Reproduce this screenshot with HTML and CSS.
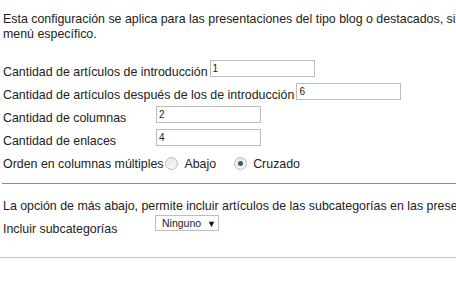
FILE: index.html
```html
<!DOCTYPE html>
<html lang="es">

<head>
   <meta charset="UTF-8">
   <title>Configuración</title>
   <link rel="stylesheet" href="styles.css">
</head>

<body>
   <div class="panel">
      <p class="intro">Esta configuración se aplica para las presentaciones del tipo blog o destacados, si no se indica otra cosa en el<br>menú específico.</p>

      <div class="row">
         <label class="lbl">Cantidad de artículos de introducción</label>
         <input class="num" type="text" value="1">
      </div>
      <div class="row">
         <label class="lbl">Cantidad de artículos después de los de introducción</label>
         <input class="num" type="text" value="6">
      </div>
      <div class="row">
         <label class="lbl">Cantidad de columnas</label>
         <input class="num" type="text" value="2">
      </div>
      <div class="row">
         <label class="lbl">Cantidad de enlaces</label>
         <input class="num" type="text" value="4">
      </div>
      <div class="row">
         <label class="lbl">Orden en columnas múltiples</label>
         <span class="radio"></span><span class="opt">Abajo</span>
         <span class="radio checked"></span><span class="opt">Cruzado</span>
      </div>

      <hr class="sep">

      <p class="note">La opción de más abajo, permite incluir artículos de las subcategorías en las presentaciones.</p>
      <div class="row">
         <label class="lbl">Incluir subcategorías</label>
         <span class="select">Ninguno <span class="arrow">▼</span></span>
      </div>

      <hr class="sep light">
   </div>
</body>
</html>
```

FILE: styles.css
```css
* {
   box-sizing: border-box;
}

body {
   margin: 0;
   font: 12.4px "Liberation Sans", Arial, sans-serif;
   color: #222;
   background-color: #fff;
   overflow: hidden;
}

.panel {
   width: 456px;
}

.intro {
   margin: 12px 0 0 3px;
   line-height: 15px;
   white-space: nowrap;
}

.row {
   display: flex;
   align-items: flex-end;
   height: 23px;
   padding-left: 3px;
   white-space: nowrap;
}

.intro + .row {
   margin-top: 15px;
}

.lbl {
   display: inline-block;
   min-width: 151px;
   line-height: 15px;
}

.num {
   width: 105px;
   height: 17px;
   margin: 0 0 3px 2px;
   padding: 0 2px;
   border: 1px solid #bcbcbc;
   font: 10px "Liberation Sans", Arial, sans-serif;
   line-height: 9px;
   color: #222;
   vertical-align: top;
}

.radio {
   display: inline-block;
   width: 13px;
   height: 13px;
   margin: 0 6px 2px 2px;
   border: 1px solid #bdbdbd;
   border-radius: 50%;
   background: linear-gradient(#e8e8e8, #f8f8f8);
}

.radio.checked {
   margin-left: 18px;
   position: relative;
}

.radio.checked::after {
   content: "";
   position: absolute;
   left: 3px;
   top: 3px;
   width: 5px;
   height: 5px;
   border-radius: 50%;
   background-color: #555;
}

.opt {
   line-height: 15px;
}

.sep {
   margin: 11px 0 0 2px;
   border: 0;
   border-top: 1px solid #8a8a8a;
}

.sep.light {
   margin: 20px 0 0 0;
   border-top-color: #c8c8c8;
}

.note {
   margin: 15px 0 0 3px;
   line-height: 15px;
   white-space: nowrap;
}

.note + .row {
   margin-top: 0;
}

.select {
   display: inline-block;
   width: 64px;
   height: 16px;
   margin: 1px 0 0 1px;
   padding: 1px 0 0 6px;
   border: 1px solid #bdbdbd;
   font: 10.5px "Liberation Sans", Arial, sans-serif;
   line-height: 12px;
   color: #222;
   align-self: flex-start;
}

.arrow {
   font-size: 9px;
   margin-left: 3px;
   color: #111;
}
```
